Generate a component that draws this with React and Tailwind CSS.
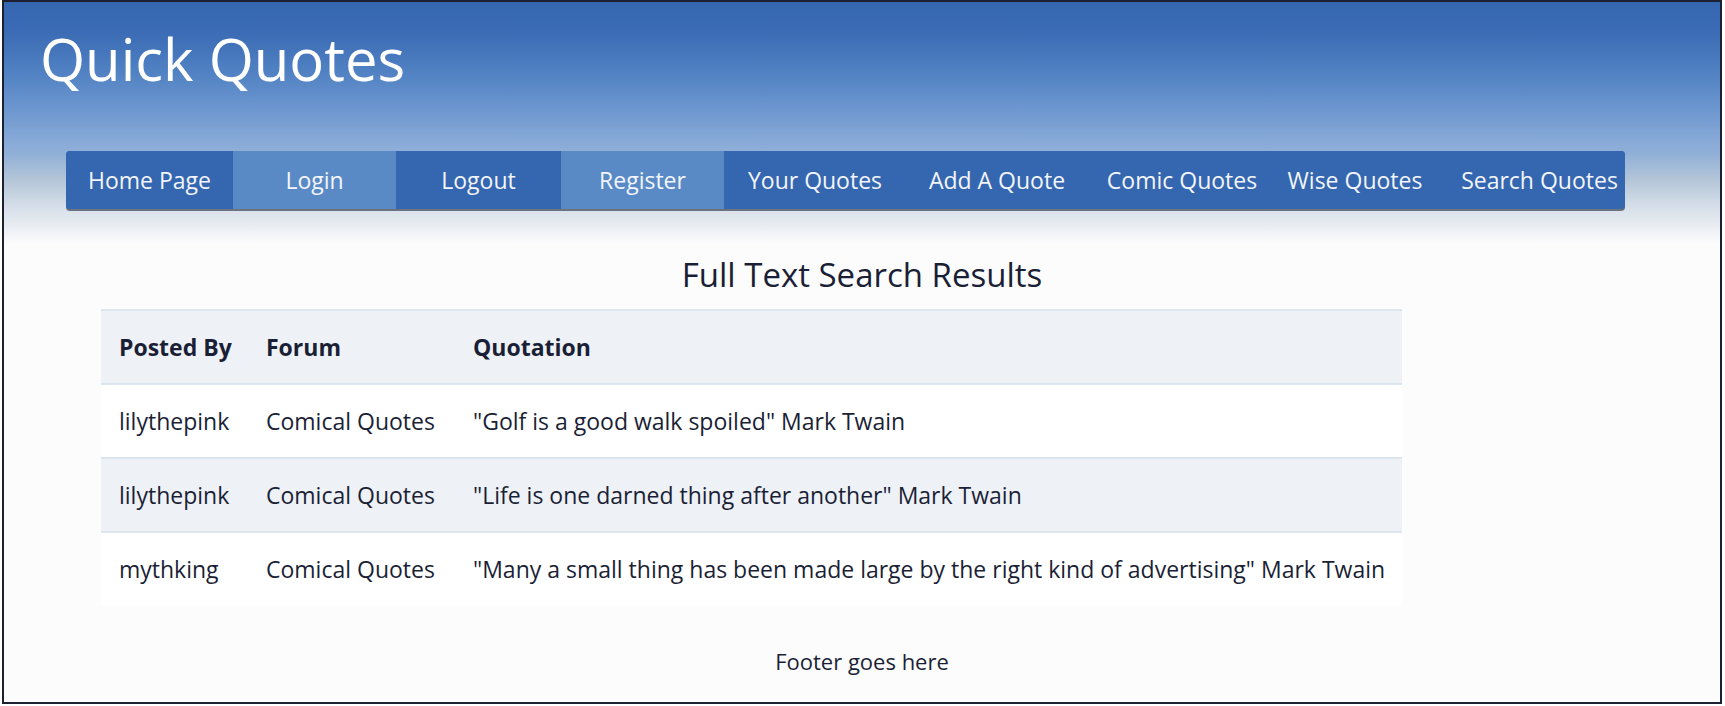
import React from 'react';

const navItems = [
  { label: 'Home Page', width: 'w-[167px]', light: false, extra: '' },
  { label: 'Login', width: 'w-[163px]', light: true, extra: '' },
  { label: 'Logout', width: 'w-[165px]', light: false, extra: '' },
  { label: 'Register', width: 'w-[163px]', light: true, extra: '' },
  { label: 'Your Quotes', width: 'w-[182px]', light: false, extra: '' },
  { label: 'Add A Quote', width: 'w-[182px]', light: false, extra: '' },
  { label: 'Comic Quotes', width: 'w-[188px]', light: false, extra: '' },
  { label: 'Wise Quotes', width: 'w-[158px]', light: false, extra: '' },
  { label: 'Search Quotes', width: 'w-[191px]', light: false, extra: 'pl-[20px]' },
];

const results = [
  { postedBy: 'lilythepink', forum: 'Comical Quotes', quote: '"Golf is a good walk spoiled" Mark Twain' },
  { postedBy: 'lilythepink', forum: 'Comical Quotes', quote: '"Life is one darned thing after another" Mark Twain' },
  { postedBy: 'mythking', forum: 'Comical Quotes', quote: '"Many a small thing has been made large by the right kind of advertising" Mark Twain' },
];

function NavBar() {
  return (
    <nav className="ml-[62px] flex w-[1559px] h-[58px] rounded-[4px] overflow-hidden bg-[#3566b0] shadow-[0_2px_0_#6b7380]">
      {navItems.map((item) => (
        <a
          key={item.label}
          href="#"
          className={
            (item.light ? 'bg-[#5a8ac6] ' : 'bg-[#3566b0] ') +
            item.width + ' ' + item.extra +
            ' flex items-center justify-center text-[23px] text-[#f2f5fb] whitespace-nowrap'
          }
        >
          {item.label}
        </a>
      ))}
    </nav>
  );
}

function ResultsTable() {
  return (
    <table className="ml-[97px] border-collapse text-[23px] text-[#1b1f36]">
      <thead>
        <tr className="bg-[#eef2f7] border-y-2 border-[#dde5ee] h-[74px]">
          <th className="text-left font-bold pl-[18px] pr-[14px] w-[147px]">Posted By</th>
          <th className="text-left font-bold pl-[18px] pr-[18px] w-[207px]">Forum</th>
          <th className="text-left font-bold pl-[18px] pr-[17px]">Quotation</th>
        </tr>
      </thead>
      <tbody>
        {results.map((row, idx) => (
          <tr
            key={idx}
            className={
              'h-[74px] ' +
              (idx % 2 === 1 ? 'bg-[#eef2f7] border-y-2 border-[#dde5ee]' : 'bg-white')
            }
          >
            <td className="pl-[18px] pr-[14px] whitespace-nowrap">{row.postedBy}</td>
            <td className="pl-[18px] pr-[18px] whitespace-nowrap">{row.forum}</td>
            <td className="pl-[18px] pr-[17px] whitespace-nowrap">{row.quote}</td>
          </tr>
        ))}
      </tbody>
    </table>
  );
}

export default function App() {
  return (
    <div
      className="w-[1725px] h-[706px] bg-white pl-[2px] pr-[3px] pb-[2px]"
      style={{ fontFamily: '"Open Sans", "Noto Sans", sans-serif' }}
    >
      <div className="h-full border-2 border-[#1c2030] bg-[#fcfcfd] flex flex-col">
        <header className="h-[241px] pt-[25px] bg-[linear-gradient(to_bottom,#3566b0_0%,#3a6bb4_12%,#4f80c2_28%,#6893cd_42%,#82a6d6_55%,#91b0d8_63%,#b4c6d8_74%,#d6dfe9_85%,#e6ebf1_92%,#fcfcfd_100%)]">
          <h1 className="pl-[36px] text-[58px] leading-[64px] text-white font-normal">Quick Quotes</h1>
          <div className="mt-[60px]">
            <NavBar />
          </div>
        </header>
        <main className="flex flex-col">
          <h2 className="mt-[12px] text-center text-[33px] leading-[40px] text-[#1b1f36]">Full Text Search Results</h2>
          <div className="mt-[14px]">
            <ResultsTable />
          </div>
          <footer className="mt-[40px] text-center text-[22px] leading-[30px] text-[#1b1f36]">Footer goes here</footer>
        </main>
      </div>
    </div>
  );
}
